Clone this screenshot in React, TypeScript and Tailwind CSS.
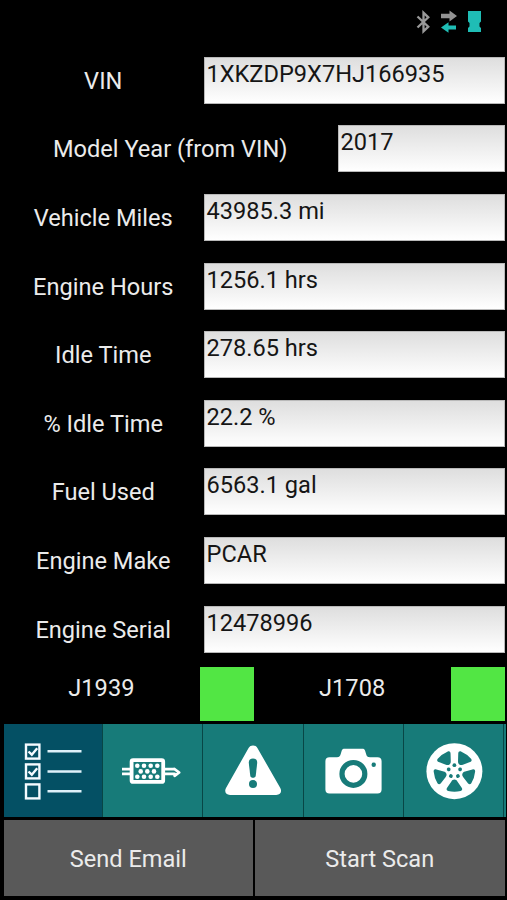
import React from "react";

const fields = [
  { label: "VIN", value: "1XKZDP9X7HJ166935" },
  { label: "Model Year (from VIN)", value: "2017", wide: true },
  { label: "Vehicle Miles", value: "43985.3 mi" },
  { label: "Engine Hours", value: "1256.1 hrs" },
  { label: "Idle Time", value: "278.65 hrs" },
  { label: "% Idle Time", value: "22.2 %" },
  { label: "Fuel Used", value: "6563.1 gal" },
  { label: "Engine Make", value: "PCAR" },
  { label: "Engine Serial", value: "12478996" },
];

const StatusBar = () => (
  <div className="flex h-[46px] shrink-0 items-start justify-end gap-[11px] pr-[26px] pt-[10px]">
    <svg width="14" height="24" viewBox="0 0 14 24" fill="none" stroke="#999" strokeWidth="2.3">
      <path d="M1.5 6.5L12.3 16.7L7.5 21.3V2.7L12.3 7.3L1.5 17.5" />
    </svg>
    <svg width="16" height="24" viewBox="0 0 16 24">
      <path d="M0 3.8H8.5V0.5L16 6L8.5 11.5V8.2H0Z" fill="#929292" />
      <path d="M15 15.5H7.5V12.2L0 17.5L7.5 22.8V19.5H15Z" fill="#1fbdb5" />
    </svg>
    <svg width="13" height="24" viewBox="0 0 13 24" fill="#1fbdb5">
      <path d="M0 1H13V11.5L11.5 13V16.5L13 18V22H0V18L1.5 16.5V13L0 11.5Z" />
    </svg>
  </div>
);

const ChecklistIcon = () => (
  <svg width="60" height="60" viewBox="0 0 60 60" fill="none" stroke="#f4fbff" strokeWidth="2.4">
    <rect x="3" y="3.6" width="13.4" height="14" />
    <rect x="3" y="23.4" width="13.4" height="14" />
    <rect x="3" y="43.4" width="13.4" height="14" />
    <path d="M5.5 10.5L8.8 13.7L14.2 7.3M5.5 30.5L8.8 33.7L14.2 27.3" />
    <path d="M24.5 10.2H58.5M24.5 30.5H58.5M24.5 50.2H58.5" stroke="#dff1fa" />
  </svg>
);

const FilterIcon = () => (
  <svg width="60" height="60" viewBox="0 0 60 60" fill="none" stroke="#fff">
    <rect x="9.6" y="19.1" width="31.6" height="21.8" rx="1.5" strokeWidth="3.8" />
    <path
      d="M0 28.2H8M0 32.8H8M43 28.2H52.2V27.8L57.2 31.5L52.6 34.8V32.8H43"
      strokeWidth="2.7"
      strokeLinejoin="round"
    />
    <g fill="#fff" stroke="none">
      {[15.3, 22, 28.7, 35.3].map((x) => (
        <React.Fragment key={x}>
          <circle cx={x} cy="24.8" r="2.3" />
          <circle cx={x} cy="35.8" r="2.3" />
        </React.Fragment>
      ))}
      {[18.7, 25.3, 32].map((x) => (
        <circle key={x} cx={x} cy="30.4" r="2.3" />
      ))}
    </g>
  </svg>
);

const WarningIcon = () => (
  <svg width="60" height="60" viewBox="0 0 60 60">
    <path
      d="M30 4.5C31.9 4.5 33.4 5.3 34.4 7L57.3 47C59.3 50.5 57.3 53.9 53.3 53.9H7C3 53.9 1 50.5 3 47L25.6 7C26.6 5.3 28.1 4.5 30 4.5Z"
      fill="#fff"
    />
    <path
      d="M30 17.5C32.8 17.5 34.4 19.2 34.2 22L32.7 34.9C32.4 37.3 27.6 37.3 27.3 34.9L25.8 22C25.6 19.2 27.2 17.5 30 17.5Z"
      fill="#177b79"
    />
    <circle cx="30" cy="43.1" r="4" fill="#177b79" />
  </svg>
);

const CameraIcon = () => (
  <svg width="60" height="60" viewBox="0 0 60 60">
    <path
      d="M6.5 16.2H14C16.5 16.2 17.2 15 17.7 13L18.7 9.8C19.2 8.4 20 7.8 21.5 7.8H39.3C40.8 7.8 41.6 8.4 42.1 9.8L43.1 13C43.7 15.2 44.5 16.2 47 16.2H54.5C57.2 16.2 58.6 17.6 58.6 20.3V48.4C58.6 51.1 57.2 52.5 54.5 52.5H6.5C3.8 52.5 2.4 51.1 2.4 48.4V20.3C2.4 17.6 3.8 16.2 6.5 16.2Z"
      fill="#fff"
    />
    <circle cx="30.4" cy="32.9" r="11.4" fill="none" stroke="#177b79" strokeWidth="5.2" />
    <circle cx="50.7" cy="23.8" r="2.2" fill="#177b79" />
  </svg>
);

const WheelIcon = () => (
  <svg width="60" height="60" viewBox="0 0 60 60">
    <circle cx="30.4" cy="30.2" r="28" fill="#fff" />
    <g transform="translate(30.4 30.2)" fill="#177b79">
      {[0, 72, 144, 216, 288].map((angle) => (
        <g key={angle} transform={`rotate(${angle})`}>
          <path d="M0 8.4C1.4 8.4 2.2 9.1 3 10.3L7.3 16.6C8.3 18.2 7.8 19.3 6.2 19.8Q0 21.2 -6.2 19.8C-7.8 19.3 -8.3 18.2 -7.3 16.6L-3 10.3C-2.2 9.1 -1.4 8.4 0 8.4Z" />
          <circle cx="0" cy="-6" r="1.9" />
        </g>
      ))}
    </g>
  </svg>
);

const tabs = [
  { name: "Checklist", Icon: ChecklistIcon },
  { name: "Filter", Icon: FilterIcon },
  { name: "Faults", Icon: WarningIcon },
  { name: "Camera", Icon: CameraIcon },
  { name: "Tires", Icon: WheelIcon },
];

const Protocol = ({ name }: { name: string }) => (
  <div className="flex flex-1">
    <div className="flex-1 pt-[7px] text-center">{name}</div>
    <div className="h-[54px] w-[54px] bg-[#52e644]" />
  </div>
);

const App = () => {
  return (
    <div className="flex h-[900px] w-[507px] flex-col overflow-hidden bg-black font-['Roboto',sans-serif] text-[23.6px] leading-[28px] text-[#ebebeb]">
      <StatusBar />

      <div className="h-[617.4px] shrink-0 pl-[3px] pr-[2.5px]">
        {fields.map((field) => (
          <div key={field.label} className="flex h-[68.6px] items-center">
            <div className={`shrink-0 pt-px text-center ${field.wide ? "w-[334.5px]" : "w-[200.5px]"}`}>
              {field.label}
            </div>
            <div className="h-[47px] flex-1 border border-[#b9b9b9] bg-linear-to-b from-[#dedede] to-white pl-[2px] pt-[2px] text-[#151515]">
              {field.value}
            </div>
          </div>
        ))}
      </div>

      <div className="mt-[3.6px] flex h-[54px] shrink-0 pl-[3px] pr-[2.5px]">
        <Protocol name="J1939" />
        <Protocol name="J1708" />
      </div>

      <div className="ml-[3.5px] mr-px mt-[3px] flex h-[93px] shrink-0 gap-px bg-[#084646]">
        {tabs.map(({ name, Icon }, index) => (
          <button
            key={name}
            aria-label={name}
            className={`flex shrink-0 items-center justify-center pt-px ${
              index === 0 ? "w-[98.3px] bg-[#045064]" : "w-[99.4px] bg-[#177b79]"
            }`}
          >
            <Icon />
          </button>
        ))}
        <div className="flex-1 bg-[#177b79]" />
      </div>

      <div className="mt-[3px] flex h-[76px] shrink-0 gap-[2px] pl-[3.5px] pr-[2.5px]">
        <button className="flex-1 bg-[#595959] pt-[2px]">Send Email</button>
        <button className="flex-1 bg-[#595959] pt-[2px]">Start Scan</button>
      </div>
    </div>
  );
};

export default App;
